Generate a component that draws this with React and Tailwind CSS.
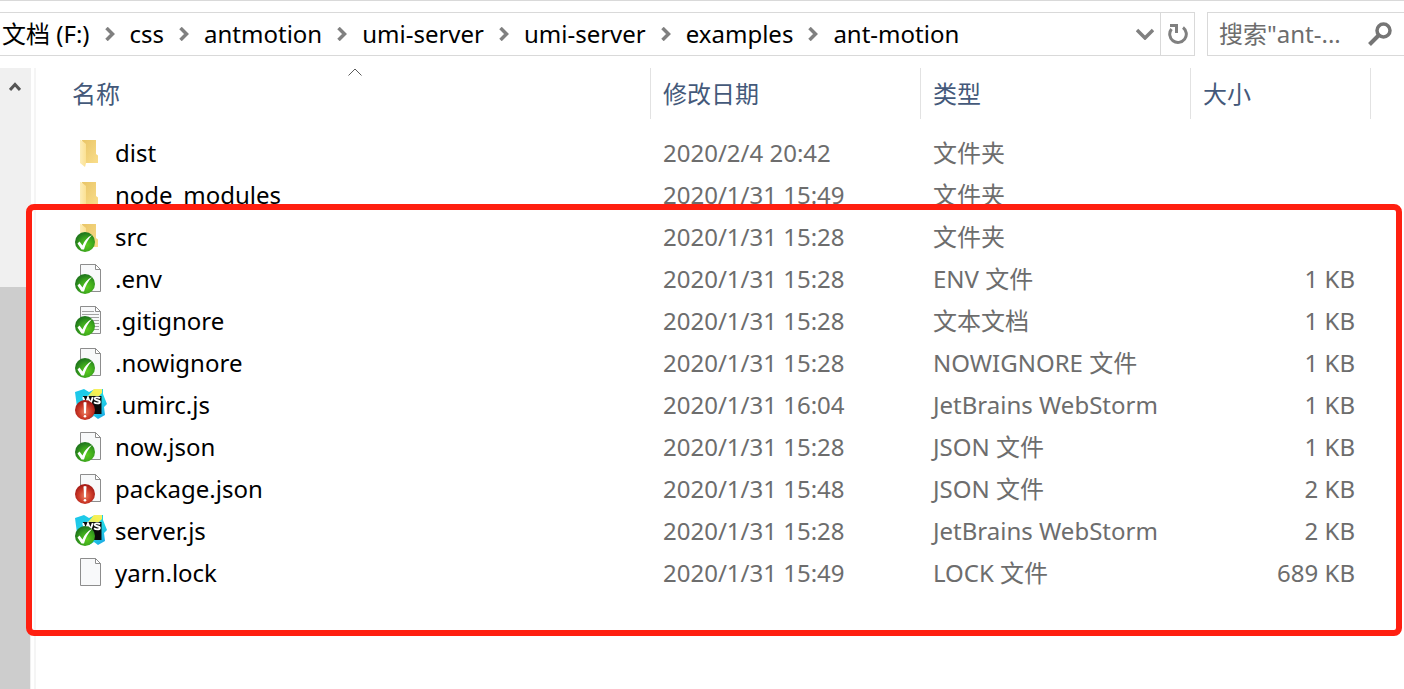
import React from 'react';

const crumbs = ['文档 (F:)', 'css', 'antmotion', 'umi-server', 'umi-server', 'examples', 'ant-motion'];

const files = [
  { name: 'dist', icon: 'folder', date: '2020/2/4 20:42', type: '文件夹', size: '' },
  { name: 'node_modules', icon: 'folder', date: '2020/1/31 15:49', type: '文件夹', size: '' },
  { name: 'src', icon: 'folder', badge: 'ok', date: '2020/1/31 15:28', type: '文件夹', size: '' },
  { name: '.env', icon: 'file', badge: 'ok', date: '2020/1/31 15:28', type: 'ENV 文件', size: '1 KB' },
  { name: '.gitignore', icon: 'text', badge: 'ok', date: '2020/1/31 15:28', type: '文本文档', size: '1 KB' },
  { name: '.nowignore', icon: 'file', badge: 'ok', date: '2020/1/31 15:28', type: 'NOWIGNORE 文件', size: '1 KB' },
  { name: '.umirc.js', icon: 'webstorm', badge: 'modified', date: '2020/1/31 16:04', type: 'JetBrains WebStorm', size: '1 KB' },
  { name: 'now.json', icon: 'file', badge: 'ok', date: '2020/1/31 15:28', type: 'JSON 文件', size: '1 KB' },
  { name: 'package.json', icon: 'file', badge: 'modified', date: '2020/1/31 15:48', type: 'JSON 文件', size: '2 KB' },
  { name: 'server.js', icon: 'webstorm', badge: 'ok', date: '2020/1/31 15:28', type: 'JetBrains WebStorm', size: '2 KB' },
  { name: 'yarn.lock', icon: 'file', date: '2020/1/31 15:49', type: 'LOCK 文件', size: '689 KB' }
];

// Shared gradients, referenced by id from every row icon.
function IconDefs() {
  return (
    <svg width="0" height="0" className="absolute" aria-hidden="true">
      <defs>
        <linearGradient id="folderBack" x1="0" y1="0" x2="1" y2="1">
          <stop offset="0" stopColor="#e9c566" />
          <stop offset="1" stopColor="#f9dd8b" />
        </linearGradient>
        <linearGradient id="folderFront" x1="0" y1="0" x2="1" y2="0">
          <stop offset="0" stopColor="#fdedb8" />
          <stop offset="1" stopColor="#fbe193" />
        </linearGradient>
        <radialGradient id="okFill" cx="0.6" cy="0.65" r="0.6">
          <stop offset="0" stopColor="#5ccb1e" />
          <stop offset="0.6" stopColor="#3aa41c" />
          <stop offset="1" stopColor="#227a1d" />
        </radialGradient>
        <radialGradient id="modifiedFill" cx="0.5" cy="0.6" r="0.55">
          <stop offset="0" stopColor="#ea7f63" />
          <stop offset="0.55" stopColor="#cf3d2a" />
          <stop offset="1" stopColor="#a81c17" />
        </radialGradient>
        <linearGradient id="wsFill" x1="0" y1="0" x2="1" y2="1">
          <stop offset="0" stopColor="#1cc4ea" />
          <stop offset="0.6" stopColor="#22d6e6" />
          <stop offset="1" stopColor="#1a9fe4" />
        </linearGradient>
        <linearGradient id="wsYellow" x1="0" y1="1" x2="1" y2="0">
          <stop offset="0" stopColor="#cdeb7a" />
          <stop offset="0.5" stopColor="#f8f04c" />
          <stop offset="1" stopColor="#f3ef6a" />
        </linearGradient>
      </defs>
    </svg>
  );
}

function FolderShape() {
  return (
    <g>
      <path d="M7 3h14v14l2 1.500v7.500H10z" fill="url(#folderBack)" />
      <path d="M5 3h1l5 4v19l-1 4-5-4z" fill="url(#folderFront)" />
    </g>
  );
}

function PageShape({ lined }) {
  return (
    <g>
      <path d="M5.500 1.500h15l5 5v22h-20z" fill="#f8f9fa" stroke="#8d8d8d" />
      <path d="M20.500 1.500v5h5z" fill="#fff" stroke="#8d8d8d" />
      {lined && <path d="M7 6.500h12M7 9.500h17M7 12.500h17M7 15.500h17M7 18.500h17M7 21.500h17M7 24.500h17" stroke="#a3a3a3" />}
    </g>
  );
}

function WebStormShape() {
  return (
    <g>
      <path d="M0 3l9-3 5 3 6-3h8l0 5 4 10-3 3 1 8-7 4-4-3-5 3-11-4z" fill="url(#wsFill)" />
      <path d="M13 7l6-7h8v4l-3 3z" fill="url(#wsYellow)" />
      <path d="M8 7h18.500v18H8z" fill="#0b0b0b" />
      <path d="M8 8.200l2.500 6.300 2.500-6 2.500 6 2.300-6.300" fill="none" stroke="#fff" strokeWidth="1.900" />
      <path d="M25 9.300c-1.500-1.300-5.500-1.300-5.300.5.200 1.900 5.300 1 5.200 3.100-.1 2-4 2-5.900.4" fill="none" stroke="#fff" strokeWidth="1.800" />
    </g>
  );
}

function Badge({ kind }) {
  return kind === 'ok' ? (
    <g>
      <circle cx="10" cy="21" r="10" fill="url(#okFill)" />
      <path d="M2.500 22.500l2-2 3 4c2-5 5-8.500 9.500-10.500-4 4-6.500 9-8 14.500H6.500z" fill="#fff" />
    </g>
  ) : (
    <g>
      <circle cx="10" cy="21" r="10" fill="url(#modifiedFill)" />
      <path d="M8.500 13.500q1.500-1.200 3 0L10.900 24.500H9.100z" fill="#fff" />
      <circle cx="10" cy="27.300" r="1.300" fill="#fff" />
    </g>
  );
}

function FileIcon({ icon, badge }) {
  return (
    <svg viewBox="0 0 32 32" className="size-8 shrink-0" aria-hidden="true">
      {icon === 'folder' && <FolderShape />}
      {icon === 'file' && <PageShape />}
      {icon === 'text' && <PageShape lined />}
      {icon === 'webstorm' && <WebStormShape />}
      {badge && <Badge kind={badge} />}
    </svg>
  );
}

function AddressBar() {
  return (
    <header className="flex gap-3 border-t border-[#d9d9d9] pt-[11px]">
      <div className="flex h-11 min-w-0 flex-1 border-y border-r border-[#d9d9d9]">
        <nav className="flex min-w-0 flex-1 items-center gap-[15px] overflow-hidden pl-0.5 whitespace-nowrap" aria-label="路径">
          {crumbs.map((crumb, i) => (
            <React.Fragment key={i}>
              {i > 0 && (
                <svg viewBox="0 0 10 14" className="h-3.5 w-2.5 shrink-0" fill="none" stroke="#808080" strokeWidth="3.500" aria-hidden="true">
                  <path d="M1.500 1l6 6-6 6" />
                </svg>
              )}
              <a href="#" className="text-black">{crumb}</a>
            </React.Fragment>
          ))}
        </nav>
        <button type="button" className="flex w-[30px] items-center justify-center" aria-label="以前的位置">
          <svg viewBox="0 0 18 12" className="h-3 w-[18px]" fill="none" stroke="#808080" strokeWidth="3.500" aria-hidden="true">
            <path d="M1 2l8 8 8-8" />
          </svg>
        </button>
        <button type="button" className="flex w-[34px] items-center justify-center border-l border-[#d9d9d9]" aria-label="刷新">
          <svg viewBox="0 0 20 22" className="h-[22px] w-5" fill="none" stroke="#808080" strokeWidth="3" aria-hidden="true">
            <path d="M15 4.500a8.300 8.300 0 1 1-11.500 1.500" />
            <path d="M2 2.500h6.500V10" />
          </svg>
        </button>
      </div>
      <div className="flex h-11 w-[197px] items-center border-y border-l border-[#d9d9d9] pl-[11px]">
        <input
          type="text"
          aria-label="搜索"
          placeholder={'搜索"ant-...'}
          className="min-w-0 flex-1 bg-transparent outline-none placeholder:text-[#6d6d6d]"
        />
        <svg viewBox="0 0 24 24" className="mr-3 size-6 shrink-0" fill="none" stroke="#757575" aria-hidden="true">
          <circle cx="15.500" cy="8.500" r="6.500" strokeWidth="3.500" />
          <path d="M11 13L1.500 22.500" strokeWidth="4" />
        </svg>
      </div>
    </header>
  );
}

function ScrollRail() {
  return (
    <div className="flex w-[31px] shrink-0 flex-col bg-[#f0f0f0]">
      <button type="button" className="flex h-[38px] items-center justify-center pr-0.5" aria-label="向上滚动">
        <svg viewBox="0 0 12 10" className="h-2.5 w-3" fill="none" stroke="#555" strokeWidth="3" aria-hidden="true">
          <path d="M1 8l5-5.500L11 8" />
        </svg>
      </button>
      <div className="h-[181px]" />
      <div className="mr-px flex-1 bg-[#cdcdcd]" />
    </div>
  );
}

function HeaderCell({ children }) {
  return (
    <th className="p-0 pb-[13px] text-left font-normal">
      <div className="flex h-[51px] items-center border-l border-[#e2e2e2] pl-3">{children}</div>
    </th>
  );
}

function FileTable() {
  return (
    <table className="w-full table-fixed border-collapse whitespace-nowrap text-[#6d6d6d]">
      <colgroup>
        <col />
        <col className="w-[270px]" />
        <col className="w-[270px]" />
        <col className="w-[180px]" />
        <col className="w-[34px]" />
      </colgroup>
      <thead className="text-[#44597a]">
        <tr>
          <th className="relative p-0 pb-[13px] text-left font-normal" aria-sort="ascending">
            <div className="flex h-[51px] items-center pl-9">名称</div>
            <svg viewBox="0 0 14 8" className="absolute top-0 left-[52%] h-2 w-3.5 -translate-x-1/2" fill="none" stroke="#5a5a5a" aria-hidden="true">
              <path d="M0.500 7.500L7 1l6.500 6.500" />
            </svg>
          </th>
          <HeaderCell>修改日期</HeaderCell>
          <HeaderCell>类型</HeaderCell>
          <HeaderCell>大小</HeaderCell>
          <HeaderCell />
        </tr>
      </thead>
      <tbody>
        {files.map((file) => (
          <tr key={file.name} className="h-[42px]">
            <td className="p-0 pl-[39px] text-black">
              <div className="flex items-center gap-2">
                <FileIcon icon={file.icon} badge={file.badge} />
                <span>{file.name}</span>
              </div>
            </td>
            <td className="p-0 pl-[13px]">{file.date}</td>
            <td className="p-0 pl-[13px]">{file.type}</td>
            <td className="p-0 pr-[15px] text-right">{file.size}</td>
            <td className="p-0" />
          </tr>
        ))}
      </tbody>
    </table>
  );
}

export default function App() {
  return (
    <div className="flex min-h-screen flex-col gap-3 overflow-hidden bg-white font-['Noto_Sans','Noto_Sans_CJK_SC',sans-serif] text-[24px] leading-8">
      <IconDefs />
      <AddressBar />
      <main className="relative flex flex-1 gap-[3px]">
        <ScrollRail />
        <div className="min-w-0 flex-1 border-l-2 border-[#f5f5f5]">
          <FileTable />
        </div>
        {/* Highlight frame around the project files */}
        <div className="pointer-events-none absolute top-[136px] right-[2px] left-[26px] h-[432px] rounded-lg border-6 border-[#ff1f10]" />
      </main>
    </div>
  );
}
